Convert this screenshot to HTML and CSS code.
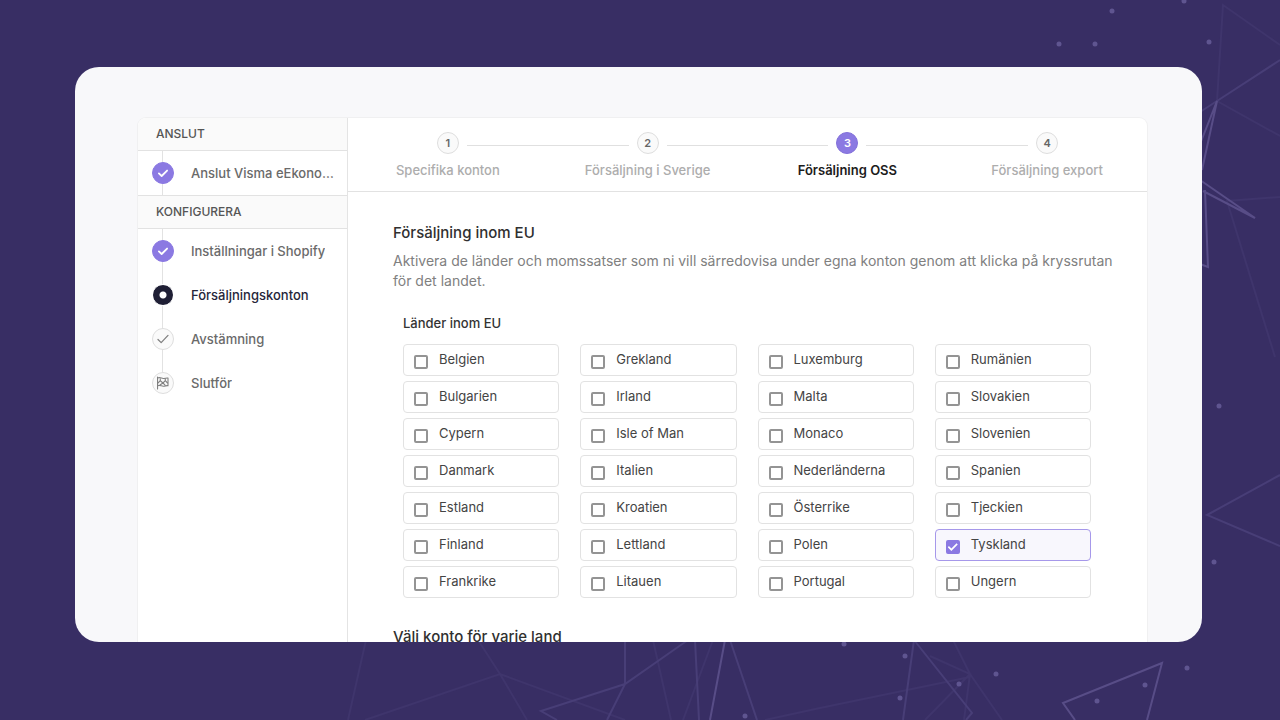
FILE: index.html
```html
<!DOCTYPE html>
<html lang="sv">
<head>
<meta charset="utf-8">
<meta name="viewport" content="width=device-width, initial-scale=1">
<title>Försäljningskonton</title>
<link rel="stylesheet" href="styles.css">
</head>
<body>
<svg class="backdrop" viewBox="0 0 1280 720" preserveAspectRatio="xMidYMid slice" aria-hidden="true">
  <g class="faint">
    <path d="M1280 45L1223 5L1217 101L1280 136M1280 197L1227 201L1275 357"/>
    <path d="M366 640L348 720M478 640L500 674L527 720M365 720L500 674L625 720M653 640L671 720M713 640L683 720M765 720L820 708L970 677M953 640L970 674L1002 720M930 656L970 674L925 720M970 674L964 720"/>
  </g>
  <g class="medium">
    <path d="M1200 112L1217 101L1280 60M1280 475L1207 515L1280 546"/>
    <path d="M625 640V684L607 720M688 640L625 684L541 711L557 720M695 640L699 720M730 640L757 720M914 640L903 720M914 640L972 713L966 720"/>
  </g>
  <g class="bright">
    <path d="M1200 144L1217 101L1202 170M1200 180L1255 218L1203 191M1205 190L1208 267L1200 264"/>
    <path d="M1075 720L1063 703L1162 663L1147 720M725 640L710 720"/>
  </g>
  <g class="dots">
    <circle cx="1112" cy="11" r="2.5"/><circle cx="1184" cy="1" r="2.5"/><circle cx="1059" cy="44" r="2.5"/><circle cx="1095" cy="44" r="2.5"/><circle cx="1209" cy="42" r="2.5"/><circle cx="1219" cy="406" r="2.5"/><circle cx="1214" cy="562" r="2.5"/><circle cx="1187" cy="668" r="2.5"/><circle cx="1145" cy="685" r="2.5"/><circle cx="1097" cy="701" r="2.5"/><circle cx="996" cy="674" r="2.5"/><circle cx="905" cy="656" r="2.5"/><circle cx="959" cy="684" r="2.5"/><circle cx="900" cy="698" r="2.5"/><circle cx="844" cy="644" r="2.5"/><circle cx="745" cy="716" r="2.5"/>
  </g>
</svg>
<div class="frame">
  <div class="card">
    <nav class="sidebar" aria-label="Guide">
      <h2 class="group-title">ANSLUT</h2>
      <ul class="tasks">
        <li class="task"><a href="#anslut"><span class="badge done"><svg viewBox="0 0 22 22"><path d="M6.500 11.500l3 2.800 6-6"/></svg></span><span class="task-name">Anslut Visma eEkonomi</span></a></li>
      </ul>
      <h2 class="group-title">KONFIGURERA</h2>
      <ul class="tasks open">
        <li class="task"><a href="#shopify"><span class="badge done"><svg viewBox="0 0 22 22"><path d="M6.500 11.500l3 2.800 6-6"/></svg></span><span class="task-name">Inställningar i Shopify</span></a></li>
        <li class="task current"><a href="#konton" aria-current="step"><span class="badge active"></span><span class="task-name">Försäljningskonton</span></a></li>
        <li class="task"><a href="#avstamning"><span class="badge"><svg viewBox="0 0 22 22"><path d="M5.500 11.500l3.500 3.500 7.500-8"/></svg></span><span class="task-name">Avstämning</span></a></li>
        <li class="task"><a href="#slutfor"><span class="badge"><svg class="flag" viewBox="0 0 22 22"><path d="M5 4.500v13M5 5.500c3.500-1.500 4.500 1.200 7 .5 1.500-.4 3-.8 4.500-.5v8.500c-1.500-.3-3 .1-4.500.5-2.500.7-4-2-7-.5"/><path d="M5.500 11l2.500-2.500L11 11l2.500-2.500L16 11M8 8.500V6.500M13.500 8.500v-2M8 13l3-2 2.500 2.500"/></svg></span><span class="task-name">Slutför</span></a></li>
      </ul>
    </nav>
    <main class="main">
      <ol class="stepper">
        <li class="step"><button type="button"><span class="marker"><span class="number">1</span></span><span>Specifika konton</span></button></li>
        <li class="step"><button type="button"><span class="marker"><span class="number">2</span></span><span>Försäljning i Sverige</span></button></li>
        <li class="step selected"><button type="button" aria-current="step"><span class="marker"><span class="number">3</span></span><span>Försäljning OSS</span></button></li>
        <li class="step"><button type="button"><span class="marker"><span class="number">4</span></span><span>Försäljning export</span></button></li>
      </ol>
      <section class="content">
        <h1 class="title">Försäljning inom EU</h1>
        <p class="intro">Aktivera de länder och momssatser som ni vill särredovisa under egna konton genom att klicka på kryssrutan för det landet.</p>
        <div class="countries" role="group" aria-labelledby="countries-title">
          <h2 class="countries-title" id="countries-title">Länder inom EU</h2>
          <div class="grid">
            <label class="country"><input type="checkbox"><span>Belgien</span></label>
            <label class="country"><input type="checkbox"><span>Bulgarien</span></label>
            <label class="country"><input type="checkbox"><span>Cypern</span></label>
            <label class="country"><input type="checkbox"><span>Danmark</span></label>
            <label class="country"><input type="checkbox"><span>Estland</span></label>
            <label class="country"><input type="checkbox"><span>Finland</span></label>
            <label class="country"><input type="checkbox"><span>Frankrike</span></label>
            <label class="country"><input type="checkbox"><span>Grekland</span></label>
            <label class="country"><input type="checkbox"><span>Irland</span></label>
            <label class="country"><input type="checkbox"><span>Isle of Man</span></label>
            <label class="country"><input type="checkbox"><span>Italien</span></label>
            <label class="country"><input type="checkbox"><span>Kroatien</span></label>
            <label class="country"><input type="checkbox"><span>Lettland</span></label>
            <label class="country"><input type="checkbox"><span>Litauen</span></label>
            <label class="country"><input type="checkbox"><span>Luxemburg</span></label>
            <label class="country"><input type="checkbox"><span>Malta</span></label>
            <label class="country"><input type="checkbox"><span>Monaco</span></label>
            <label class="country"><input type="checkbox"><span>Nederländerna</span></label>
            <label class="country"><input type="checkbox"><span>Österrike</span></label>
            <label class="country"><input type="checkbox"><span>Polen</span></label>
            <label class="country"><input type="checkbox"><span>Portugal</span></label>
            <label class="country"><input type="checkbox"><span>Rumänien</span></label>
            <label class="country"><input type="checkbox"><span>Slovakien</span></label>
            <label class="country"><input type="checkbox"><span>Slovenien</span></label>
            <label class="country"><input type="checkbox"><span>Spanien</span></label>
            <label class="country"><input type="checkbox"><span>Tjeckien</span></label>
            <label class="country"><input type="checkbox" checked><span>Tyskland</span></label>
            <label class="country"><input type="checkbox"><span>Ungern</span></label>
          </div>
        </div>
        <h2 class="title">Välj konto för varje land</h2>
      </section>
    </main>
  </div>
</div>
</body>
</html>
```

FILE: styles.css
```css
* {
  box-sizing: border-box;
}

body {
  margin: 0;
  height: 100vh;
  padding: 67px 78px 78px 75px;
  background: #382e64;
  color: #333;
  font: 13px/20px Inter, "Liberation Sans", sans-serif;
}

h1, h2, p, ul, ol {
  margin: 0;
  padding: 0;
}

ul, ol {
  list-style: none;
}

.backdrop {
  position: absolute;
  inset: 0;
  width: 100%;
  height: 100%;
  fill: none;
  stroke-width: 2;
}

.faint { stroke: #3f356c; }
.medium { stroke: #483e77; }
.bright { stroke: #584d87; }
.dots { fill: #5f5590; }

.frame {
  position: relative;
  height: 100%;
  padding: 51px 55px 0 63px;
  overflow: hidden;
  border-radius: 24px;
  background: #f8f8fa;
}

.card {
  display: grid;
  grid-template-columns: 210px 1fr;
  border-radius: 8px;
  background: #fff;
  box-shadow: 0 0 0 1px #f0f0f1;
  overflow: hidden;
}

.sidebar {
  border-right: 1px solid #e4e4e4;
}

.group-title {
  padding: 6px 18px;
  border-bottom: 1px solid #e2e2e2;
  background: #fafafa;
  color: #555;
  font-size: 12px;
  font-weight: 500;
  line-height: 20px;
}

.tasks + .group-title {
  border-top: 1px solid #e2e2e2;
}

.task a {
  display: flex;
  align-items: center;
  gap: 17px;
  height: 44px;
  padding: 0 12px 0 14px;
  color: #6a6a6a;
  font-weight: 500;
  text-decoration: none;
  background: linear-gradient(#e2e2e2, #e2e2e2) 24px 0 / 1px 100% no-repeat;
}

.open .task:last-child a {
  background-size: 1px 50%;
}

.task.current a {
  color: #25253a;
}

.task-name {
  overflow: hidden;
  text-overflow: ellipsis;
  white-space: nowrap;
}

.badge {
  flex: none;
  width: 22px;
  height: 22px;
  border: 1px solid #dedede;
  border-radius: 50%;
  background: #fafafa;
}

.badge svg {
  display: block;
  width: 100%;
  height: 100%;
  fill: none;
  stroke: #808080;
  stroke-width: 1.4;
  stroke-linecap: round;
  stroke-linejoin: round;
}

.badge .flag {
  stroke-width: 1.2;
}

.badge.done {
  border-color: #8b79e2;
  background: #8b79e2;
}

.badge.done svg {
  stroke: #fff;
  stroke-width: 2;
}

.badge.active {
  border: 1px solid #fff;
  background: radial-gradient(circle, #fff 3px, #1f1f35 4px);
}

.stepper {
  display: grid;
  grid-template-columns: repeat(4, 1fr);
  padding: 14px 0 11px;
  border-bottom: 1px solid #e2e2e2;
}

.step button {
  width: 100%;
  padding: 0;
  border: 0;
  background: none;
  color: #adadad;
  font: inherit;
  font-weight: 500;
  text-align: center;
}

.marker {
  display: flex;
  align-items: center;
  gap: 8px;
  margin-bottom: 6px;
}

.marker::before,
.marker::after {
  content: "";
  flex: 1;
  height: 1px;
  margin-top: 4px;
  background: #e0e0e0;
}

.step:first-child .marker::before,
.step:last-child .marker::after {
  background: none;
}

.number {
  width: 22px;
  height: 22px;
  border: 1px solid #dedede;
  border-radius: 50%;
  background: #fafafa;
  color: #666;
  font-size: 11px;
  font-weight: 600;
  line-height: 20px;
}

.step.selected button {
  color: #1c1c1c;
  font-weight: 600;
}

.selected .number {
  border-color: #8371da;
  background: #8b79e2;
  color: #fff;
}

.content {
  padding: 31px 28px 30px 45px;
}

.title {
  color: #303030;
  font-size: 15px;
  font-weight: 500;
  line-height: 20px;
}

.intro {
  margin-top: 8px;
  color: #808080;
  font-size: 14px;
}

.countries {
  padding: 22px 28px 29px 10px;
}

.countries-title {
  margin-bottom: 11px;
  font-size: 13px;
  font-weight: 500;
  line-height: 20px;
}

.grid {
  display: grid;
  grid-template-rows: repeat(7, 32px);
  grid-auto-columns: 1fr;
  grid-auto-flow: column;
  gap: 5px 21px;
}

.country {
  display: flex;
  align-items: flex-start;
  gap: 11px;
  padding: 4px 10px;
  border: 1px solid #e2e2e2;
  border-radius: 4px;
  color: #444;
}

.country:has(:checked) {
  border-color: #a698ea;
  background: #f8f7fd;
}

.country input {
  appearance: none;
  flex: none;
  width: 14px;
  height: 14px;
  margin: 6px 0 0;
  border: 2px solid #949494;
  border-radius: 2px;
}

.country input:checked {
  border-color: #8b79e2;
  background: #8b79e2;
}

.country input:checked::before {
  content: "";
  display: block;
  width: 10px;
  height: 10px;
  background: #fff;
  clip-path: polygon(0 52%, 12% 40%, 36% 64%, 88% 12%, 100% 24%, 36% 90%);
}
```
